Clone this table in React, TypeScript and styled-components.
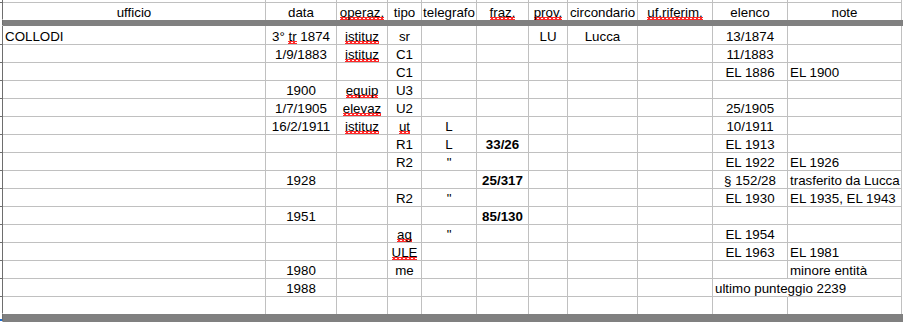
import React from "react";
import styled, { createGlobalStyle } from "styled-components";

const GlobalStyle = createGlobalStyle`
  html, body {
    margin: 0;
    padding: 0;
    background: #fff;
    overflow: hidden;
  }
  body {
    font-family: "Liberation Sans", Arial, sans-serif;
    font-size: 13.33px;
    color: #000;
  }
`;

type Align = "left" | "center" | "right";

const GRID = "#c0c0c0";
const DARK = "#6e6e6e";
const SPELL = "#ff2a2a";

// column widths incl. right border
const COLS = [263, 71, 51, 34, 55, 52, 39, 70, 75, 75, 114];
const HEADERS = [
  "ufficio",
  "data",
  "operaz.",
  "tipo",
  "telegrafo",
  "fraz.",
  "prov.",
  "circondario",
  "uf.riferim.",
  "elenco",
  "note",
];
const TYPO_HEADERS = ["operaz.", "fraz.", "prov.", "uf.riferim."];
const ALIGN: Align[] = [
  "left",
  "center",
  "center",
  "center",
  "center",
  "center",
  "center",
  "center",
  "center",
  "center",
  "left",
];

const Sheet = styled.div`
  width: 903px;
  height: 322px;
  display: flex;
  flex-direction: column;
  overflow: hidden;
`;

const Row = styled.div<{ $h: number }>`
  display: flex;
  flex: none;
  height: ${(p) => p.$h}px;
`;

const RowHead = styled.div<{ $tick?: boolean }>`
  position: relative;
  flex: none;
  width: 3px;
  box-sizing: border-box;
  border-right: 1px solid ${DARK};
  border-bottom: 1px solid ${(p) => (p.$tick ? DARK : "transparent")};
`;

const Handle = styled.div`
  position: absolute;
  left: 0;
  bottom: 0;
  width: 2px;
  height: 2px;
  background: #1a6fd8;
`;

const Cell = styled.div<{
  $w: number;
  $align: Align;
  $bold?: boolean;
  $noBottom?: boolean;
  $noRight?: boolean;
  $spill?: boolean;
}>`
  flex: none;
  width: ${(p) => p.$w}px;
  box-sizing: border-box;
  border-right: 1px solid ${(p) => (p.$noRight ? "transparent" : GRID)};
  border-bottom: ${(p) => (p.$noBottom ? "none" : `1px solid ${GRID}`)};
  display: flex;
  align-items: flex-end;
  justify-content: ${(p) =>
    p.$align === "left" ? "flex-start" : p.$align === "right" ? "flex-end" : "center"};
  padding: 0 2px;
  line-height: 15px;
  white-space: pre;
  overflow: ${(p) => (p.$spill ? "visible" : "hidden")};
  font-weight: ${(p) => (p.$bold ? "bold" : "normal")};
`;

const Text = styled.span`
  display: block;
`;

const Bar = styled.div`
  flex: 1;
  background: #808080;
`;

// red squiggle of the spell checker
const Typo = styled.span`
  background-image: linear-gradient(
      45deg,
      transparent 40%,
      ${SPELL} 40%,
      ${SPELL} 60%,
      transparent 60%
    ),
    linear-gradient(
      -45deg,
      transparent 40%,
      ${SPELL} 40%,
      ${SPELL} 60%,
      transparent 60%
    );
  background-size: 4px 3px;
  background-repeat: repeat-x;
  background-position: 0 100%;
`;

type Spec = {
  t: React.ReactNode;
  bold?: boolean;
  align?: Align;
  spill?: boolean;
};
type Entry = React.ReactNode | Spec | null;

const isSpec = (e: Entry): e is Spec =>
  typeof e === "object" && e !== null && "t" in (e as object);

const q = '"';
const b = (t: string): Spec => ({ t, bold: true });
const ty = (t: string) => <Typo>{t}</Typo>;

const ROWS: Entry[][] = [
  ["COLLODI", <>3° {ty("tr")} 1874</>, ty("istituz"), "sr", null, null, "LU", "Lucca", null, "13/1874", null],
  [null, "1/9/1883", ty("istituz"), "C1", null, null, null, null, null, "11/1883", null],
  [null, null, null, "C1", null, null, null, null, null, "EL 1886", "EL 1900"],
  [null, "1900", ty("equip"), "U3", null, null, null, null, null, null, null],
  [null, "1/7/1905", ty("elevaz"), "U2", null, null, null, null, null, "25/1905", null],
  [null, "16/2/1911", ty("istituz"), ty("ut"), "L", null, null, null, null, "10/1911", null],
  [null, null, null, "R1", "L", b("33/26"), null, null, null, "EL 1913", null],
  [null, null, null, "R2", q, null, null, null, null, "EL 1922", "EL 1926"],
  [null, "1928", null, null, null, b("25/317"), null, null, null, "§ 152/28", "trasferito da Lucca"],
  [null, null, null, "R2", q, null, null, null, null, "EL 1930", "EL 1935, EL 1943"],
  [null, "1951", null, null, null, b("85/130"), null, null, null, null, null],
  [null, null, null, ty("ag"), q, null, null, null, null, "EL 1954", null],
  [null, null, null, ty("ULE"), null, null, null, null, null, "EL 1963", "EL 1981"],
  [null, "1980", null, "me", null, null, null, null, null, null, "minore entità"],
  [null, "1988", null, null, null, null, null, null, null, { t: "ultimo punteggio 2239", align: "left", spill: true }, null],
  [null, null, null, null, null, null, null, null, null, null, null],
];

export default function App() {
  return (
    <>
      <GlobalStyle />
      <Sheet>
        <Row $h={3}>
          <RowHead $tick />
          {COLS.map((w, i) => (
            <Cell key={i} $w={w} $align="center" />
          ))}
        </Row>
        <Row $h={17}>
          <RowHead />
          {COLS.map((w, i) => (
            <Cell key={i} $w={w} $align="center" $noBottom>
              <Text>
                {TYPO_HEADERS.includes(HEADERS[i]) ? ty(HEADERS[i]) : HEADERS[i]}
              </Text>
            </Cell>
          ))}
        </Row>
        <Row $h={6}>
          <RowHead />
          <Bar />
        </Row>
        {ROWS.map((row, r) => {
          const last = r === ROWS.length - 1;
          return (
            <Row key={r} $h={r === 0 ? 19 : last ? 17 : 18}>
              <RowHead $tick={!last} />
              {COLS.map((w, c) => {
                const e = row[c];
                const spec = isSpec(e) ? e : null;
                const content = spec ? spec.t : (e as React.ReactNode);
                return (
                  <Cell
                    key={c}
                    $w={w}
                    $align={spec?.align ?? ALIGN[c]}
                    $bold={spec?.bold}
                    $spill={spec?.spill}
                    $noRight={!!spec?.spill}
                    $noBottom={last}
                  >
                    {content != null && <Text>{content}</Text>}
                  </Cell>
                );
              })}
            </Row>
          );
        })}
        <Row $h={8}>
          <RowHead>
            <Handle />
          </RowHead>
          <Bar />
        </Row>
      </Sheet>
    </>
  );
}
